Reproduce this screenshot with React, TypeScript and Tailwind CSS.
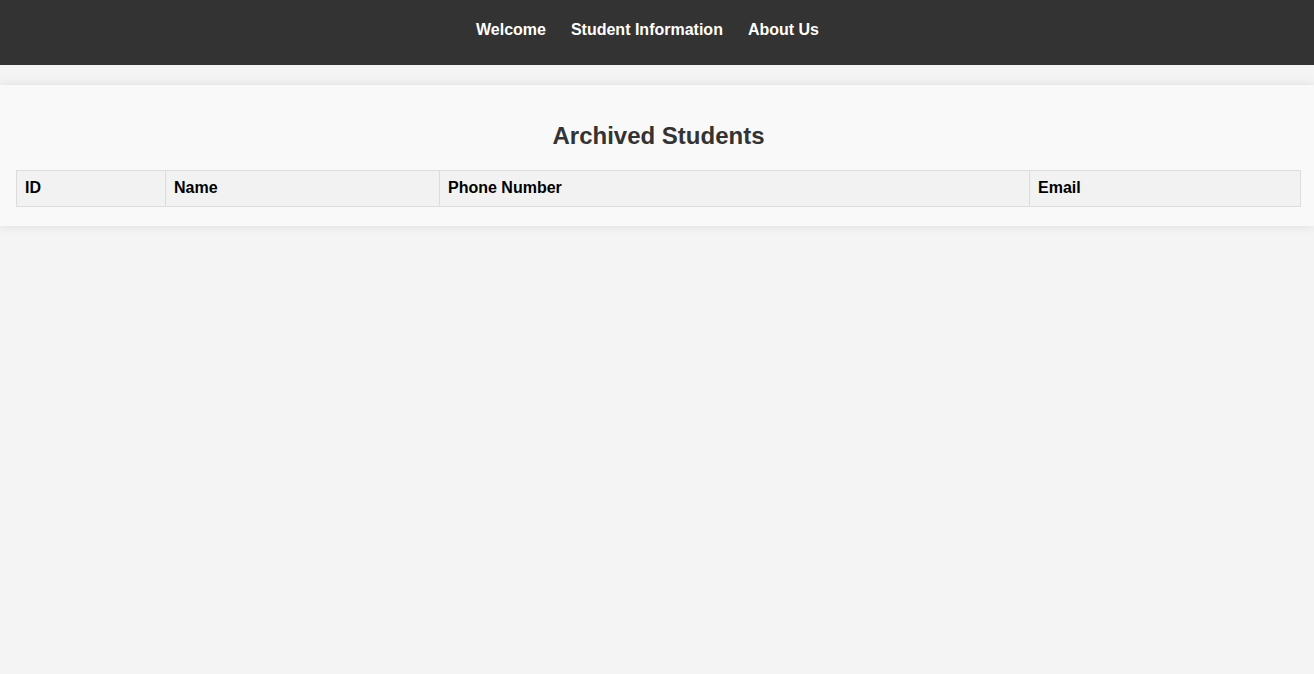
export default function App() {
  const columns = [
    { label: 'ID', width: 'w-[149px]' },
    { label: 'Name', width: 'w-[274px]' },
    { label: 'Phone Number', width: 'w-[590px]' },
    { label: 'Email', width: '' },
  ]

  return (
    <div className="min-h-[674px] bg-[#f4f4f4] font-['Liberation_Sans',Arial,sans-serif]">
      <nav className="h-[65px] bg-[#333333] pt-[21px]">
        <ul className="flex justify-center gap-[25px] pr-[19px] text-[16px] font-bold leading-[18px] text-white">
          <li>Welcome</li>
          <li>Student Information</li>
          <li>About Us</li>
        </ul>
      </nav>

      <div className="mt-[20px] bg-[#f9f9f9] pl-[16px] pr-[13px] pt-[18px] pb-[19px] shadow-[0_0_10px_rgba(0,0,0,0.1)]">
        <h2 className="mt-[19px] mb-[21px] text-center text-[24px] font-bold leading-[27px] text-[#333333]">
          Archived Students
        </h2>
        <table className="w-full border-collapse border border-[#dddddd]">
          <thead>
            <tr className="bg-[#f2f2f2]">
              {columns.map((col) => (
                <th
                  key={col.label}
                  className={`${col.width} border border-[#dddddd] px-[8px] pt-[7px] pb-[9px] text-left text-[16px] font-bold leading-[19px] text-black`}
                >
                  {col.label}
                </th>
              ))}
            </tr>
          </thead>
          <tbody></tbody>
        </table>
      </div>
    </div>
  )
}
